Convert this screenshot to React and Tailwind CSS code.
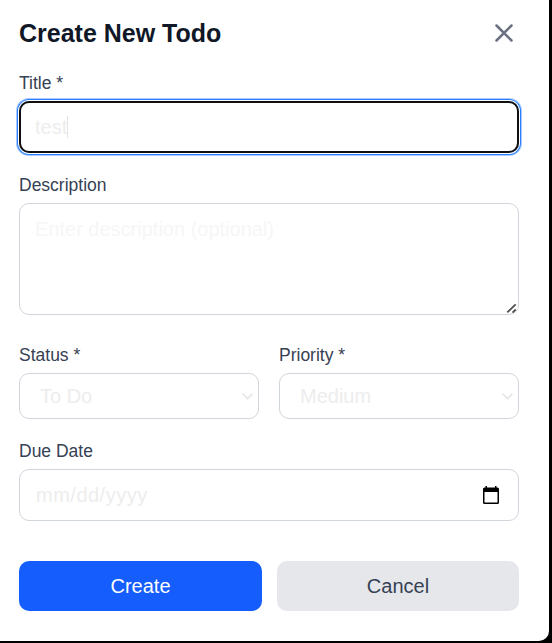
import React from 'react';

function Label({ children }) {
  return <div className="mb-[5px] h-[25px] text-[17.5px] leading-[25px] text-[#364153]">{children}</div>;
}

function Select({ value }) {
  return (
    <div role="combobox" className="flex h-[46px] items-center justify-between rounded-[10px] border border-[#d1d5dc] pl-5 pr-[5px]">
      <span className="text-[#ededed]">{value}</span>
      <svg width="11" height="8" viewBox="0 0 11 8" fill="none" stroke="#e9e9e9" strokeWidth="2">
        <path d="M0.6 1.7 5.5 6.6 10.4 1.7" />
      </svg>
    </div>
  );
}

export default function App() {
  return (
    <div className="h-[643px] w-[552px] overflow-hidden bg-black font-['Liberation_Sans',Arial,sans-serif] text-[20px] leading-[30px]">
      <div className="h-[641px] w-[549px] rounded-br-[10px] bg-white pl-[19px] pr-[30px] pt-4">
        <div className="mb-5 flex h-[35px] items-center justify-between">
          <h2 className="text-[25px] font-bold leading-[35px] text-[#101828]">Create New Todo</h2>
          <button aria-label="Close" className="mb-px text-[#6a7282]">
            <svg width="30" height="30" viewBox="0 0 24 24" fill="none" stroke="currentColor" strokeWidth="2" strokeLinecap="round" strokeLinejoin="round" className="block">
              <path d="M18 6 6 18M6 6l12 12" />
            </svg>
          </button>
        </div>

        <Label>Title *</Label>
        <div role="textbox" className="mb-5 flex h-[52px] items-center rounded-[10px] border-2 border-[#101010] pl-[14px] text-[#ededed] shadow-[0_0_0_1px_#ffffff,0_0_0_2px_#2b7fff,0_0_0_3px_#a6c9ff]">
          <span>test</span>
          <span className="h-[22px] w-px bg-[#e4e4e4]" />
        </div>

        <Label>Description</Label>
        <div role="textbox" className="relative mb-7 h-[112px] rounded-[10px] border border-[#d1d5dc] px-[15px] py-[10px] text-[#f6f6f6]">
          Enter description (optional)
          <svg className="absolute bottom-0 right-0" width="14" height="12" viewBox="0 0 14 12" fill="none" stroke="#505050" strokeWidth="1.8">
            <path d="M3.3 10.4 11.7 2.4M8.5 10.6 11.7 7.5" />
          </svg>
        </div>

        <div className="mb-5 grid grid-cols-2 gap-5">
          <div>
            <Label>Status *</Label>
            <Select value="To Do" />
          </div>
          <div>
            <Label>Priority *</Label>
            <Select value="Medium" />
          </div>
        </div>

        <Label>Due Date</Label>
        <div className="mb-10 flex h-[52px] items-center justify-between rounded-[10px] border border-[#d1d5dc] pl-4 pr-[19px]">
          <span className="tracking-[0.5px] text-[#ededed]">mm/dd/yyyy</span>
          <svg width="16" height="18" viewBox="0 0 16 18" className="mb-px block">
            <path fill="#000" fillRule="evenodd" d="M2.5 0H4v1.5h8V0h1.5v1.5H14.5a1.5 1.5 0 0 1 1.5 1.5v13.5a1.5 1.5 0 0 1-1.5 1.5h-13A1.5 1.5 0 0 1 0 16.500V3a1.500 1.500 0 0 1 1.500-1.500h1zM1.500 6v10.500h13V6z" />
          </svg>
        </div>

        <div className="flex gap-[15px]">
          <button className="h-[50px] w-[243px] rounded-[10px] bg-[#155dfc] text-white">Create</button>
          <button className="h-[50px] w-[242px] rounded-[10px] bg-[#e5e7eb] text-[#364153]">Cancel</button>
        </div>
      </div>
    </div>
  );
}
